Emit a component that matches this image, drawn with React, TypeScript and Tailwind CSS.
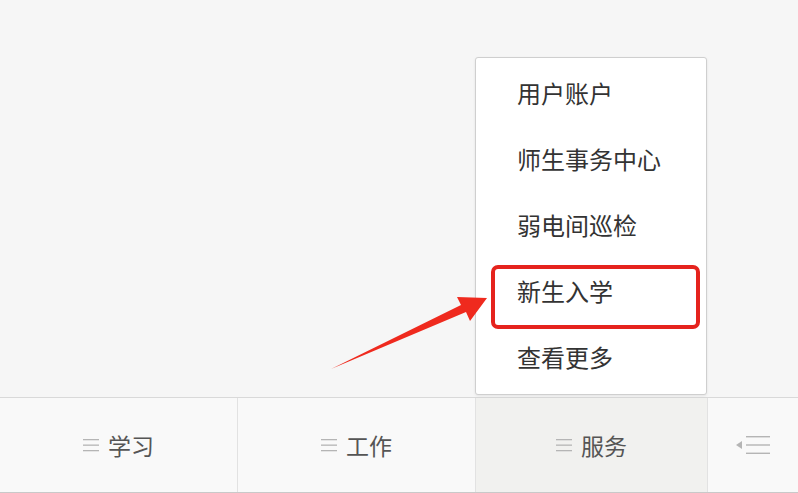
import React from "react";

const font = { fontFamily: '"Noto Sans CJK SC", "Noto Sans", sans-serif' };

function Lines({ w = 16, color = "#b5b5b5" }: { w?: number; color?: string }) {
  return (
    <svg width={w} height="14" viewBox={`0 0 ${w} 14`}>
      <rect x="0" y="1" width={w} height="1.3" fill={color} />
      <rect x="0" y="6.5" width={w} height="1.3" fill={color} />
      <rect x="0" y="12" width={w} height="1.3" fill={color} />
    </svg>
  );
}

function Tab({ label, active }: { label: string; active?: boolean }) {
  return (
    <div
      className={
        "flex items-center justify-center gap-[9px] " +
        (active ? "w-[233px] bg-[#f1f1ef] border-l border-r border-[#e2e2e2]" : "w-[237px]")
      }
    >
      <Lines />
      <span className="text-[23px] text-[#555]">{label}</span>
    </div>
  );
}

export default function App() {
  const items = ["用户账户", "师生事务中心", "弱电间巡检", "新生入学", "查看更多"];
  return (
    <div className="relative w-[798px] h-[493px] bg-[#f6f6f6] overflow-hidden flex flex-col" style={font}>
      <div className="flex-1" />
      <div className="h-[96px] flex bg-[#f9f9f9] border-t border-[#d9d9d9] border-b border-b-[#c9c9c9]">
        <Tab label="学习" />
        <div className="w-px bg-[#e2e2e2]" />
        <Tab label="工作" />
        <Tab label="服务" active />
        <div className="flex-1 flex items-center justify-center gap-[4px]">
          <svg width="6" height="8" viewBox="0 0 6 8">
            <polygon points="6,0 6,8 0,4" fill="#b5b5b5" />
          </svg>
          <svg width="24" height="20" viewBox="0 0 24 20">
            <rect x="0" y="1" width="24" height="1.4" fill="#b5b5b5" />
            <rect x="0" y="9.3" width="24" height="1.4" fill="#b5b5b5" />
            <rect x="0" y="17.6" width="24" height="1.4" fill="#b5b5b5" />
          </svg>
        </div>
      </div>

      <div className="absolute left-[475px] top-[57px] w-[232px] h-[338px] bg-white border border-[#cfcfcf] rounded-[3px] shadow-[0_1px_3px_rgba(0,0,0,0.08)] pt-[2px]">
        {items.map((t) => (
          <div key={t} className="h-[66px] flex items-center pl-[41px] text-[24px] text-[#333]">
            {t}
          </div>
        ))}
        <div className="absolute left-[15px] top-[207px] w-[209px] h-[64px] border-[4px] border-[#e5231d] rounded-[7px]" />
      </div>

      <svg className="absolute left-0 top-0" width="798" height="493" viewBox="0 0 798 493">
        <polygon points="331,369 461,305 457,297 487,298 470,321 466,312" fill="#ef2a1e" />
      </svg>
    </div>
  );
}
